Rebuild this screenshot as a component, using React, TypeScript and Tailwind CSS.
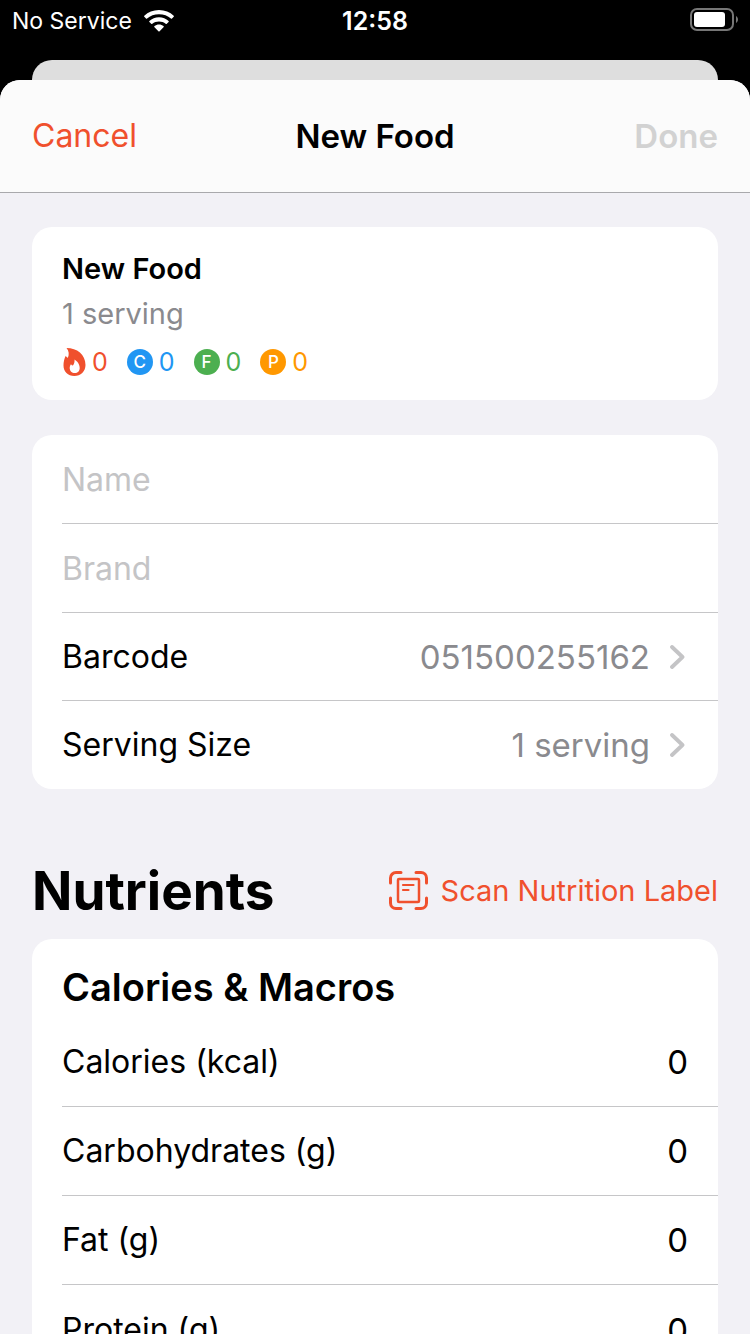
import { useState } from "react";

const macros = [
  { letter: "C", label: "Carbohydrates", value: 0, text: "text-[#2196f3]", bg: "bg-[#2196f3]" },
  { letter: "F", label: "Fat", value: 0, text: "text-[#4caf50]", bg: "bg-[#4caf50]" },
  { letter: "P", label: "Protein", value: 0, text: "text-[#ff9800]", bg: "bg-[#ff9800]" },
];

const nutrients = [
  { id: "calories", label: "Calories (kcal)" },
  { id: "carbs", label: "Carbohydrates (g)" },
  { id: "fat", label: "Fat (g)" },
  { id: "protein", label: "Protein (g)" },
];

function WifiIcon() {
  return (
    <svg width="30" height="22" viewBox="0 0 30 22" fill="#fff" aria-hidden="true">
      <path d="M15 0C9.200 0 4 2.200 .3 5.700a.8.8 0 0 0 0 1.100l1.700 1.700a.8.8 0 0 0 1.100 0C6.200 5.800 10.400 4.300 15 4.300s8.800 1.500 11.900 4.200a.8.8 0 0 0 1.100 0l1.700-1.700a.8.8 0 0 0 0-1.100C26 2.200 20.800 0 15 0Z" />
      <path d="M15 7.200c-3.700 0-7.100 1.400-9.600 3.700a.8.8 0 0 0 0 1.100l1.800 1.800a.8.8 0 0 0 1.100 0c1.800-1.500 4.200-2.300 6.700-2.300s4.900.8 6.700 2.300a.8.8 0 0 0 1.100 0l1.800-1.800a.8.8 0 0 0 0-1.100c-2.500-2.300-5.900-3.700-9.600-3.700Z" />
      <path d="M15 14.500c-1.700 0-3.300.6-4.500 1.600a.7.7 0 0 0 0 1.100l3.900 4a.8.8 0 0 0 1.200 0l3.900-4a.7.7 0 0 0 0-1.100c-1.200-1-2.800-1.600-4.500-1.600Z" />
    </svg>
  );
}

function BatteryIcon() {
  return (
    <svg width="48" height="24" viewBox="0 0 48 24" fill="none" aria-hidden="true">
      <rect x="1" y="1" width="42" height="21" rx="6" stroke="#767676" strokeWidth="2" />
      <rect x="4" y="4" width="31" height="15" rx="3" fill="#fff" />
      <path d="M46 8c1.500 1 2 2.200 2 3.500S47.500 14 46 15Z" fill="#767676" />
    </svg>
  );
}

function FlameIcon() {
  return (
    <svg width="23" height="28" viewBox="0 0 23 28" aria-hidden="true">
      <path
        d="M3.500 0C14 0 22.500 6.500 22.500 17c0 6.500-4.800 11-11.200 11S.5 23.800.5 17.500c0-3.300.7-6.800 2.300-9.800.5 1 1.100 1.600 2.100 2C6.300 6.500 6 2.700 3.500 0Z"
        fill="#f0502d"
      />
      <path
        d="M11.500 11.500c2.500 1.500 5.200 4.700 5.200 8.400 0 3-2 5-4.900 5s-5.100-2-5.100-5c0-1.400.5-2.700 1.300-3.700.5.700 1.100 1.200 1.900 1.400 1.300-1.700 1.900-4 1.600-6.100Z"
        fill="#fff"
      />
    </svg>
  );
}

function ScanIcon() {
  return (
    <svg width="40" height="40" viewBox="0 0 40 40" fill="none" stroke="currentColor" strokeLinecap="round" strokeLinejoin="round" aria-hidden="true">
      <path
        d="M1.500 12V7A5.500 5.500 0 0 1 7 1.500h5M27 1.500h5A5.500 5.500 0 0 1 37.500 7v5M37.500 27v5a5.500 5.500 0 0 1-5.500 5.500h-5M12 37.500H7A5.500 5.500 0 0 1 1.500 32v-5"
        strokeWidth="3"
      />
      <rect x="9" y="8" width="21" height="23" rx="1" strokeWidth="2.500" />
      <path d="M14 14h10.500M14 19h5.500" strokeWidth="2.200" />
    </svg>
  );
}

function Chevron() {
  return (
    <svg width="16" height="24" viewBox="0 0 16 24" fill="none" aria-hidden="true">
      <path d="M2 2L12.500 12 2 22" stroke="#c4c4c6" strokeWidth="3.800" strokeLinecap="round" strokeLinejoin="round" />
    </svg>
  );
}

function DetailRow({ label, value }: { label: string; value: string }) {
  return (
    <button type="button" className="flex h-[88px] w-full items-center pr-8 text-left">
      <span className="flex-1">{label}</span>
      <span className="text-[33px] text-[#8a8a8e]">{value}</span>
      <span className="ml-5">
        <Chevron />
      </span>
    </button>
  );
}

export default function App() {
  const [name, setName] = useState("");
  const [brand, setBrand] = useState("");
  const [values, setValues] = useState<Record<string, string>>({});

  return (
    <div className="flex h-screen flex-col bg-black font-['Inter','Liberation_Sans',sans-serif] text-[32px] leading-10 text-black">
      <div className="grid h-[60px] shrink-0 grid-cols-3 items-start px-3 pt-2 text-[23px] leading-[26px] text-white">
        <div className="flex items-center gap-3">
          <span>No Service</span>
          <WifiIcon />
        </div>
        <time className="text-center text-[25px] font-semibold">12:58</time>
        <div className="flex justify-end">
          <BatteryIcon />
        </div>
      </div>

      <div className="mx-8 h-5 shrink-0 rounded-t-[20px] bg-[#dedede]" />

      <div className="flex min-h-0 flex-1 flex-col overflow-hidden rounded-t-[20px] bg-[#f2f1f6]">
        <header className="grid h-[113px] shrink-0 grid-cols-3 items-center border-b border-[#a9a9ac] bg-[#fbfbfb] px-8">
          <button type="button" className="justify-self-start text-[#f0502d]">
            Cancel
          </button>
          <h1 className="text-center text-[33px] font-semibold">New Food</h1>
          <button type="button" disabled className="justify-self-end text-[33px] font-semibold text-[#d2d2d2]">
            Done
          </button>
        </header>

        <main className="min-h-0 flex-1 overflow-y-auto px-8 pt-[34px] [scrollbar-width:none]">
          <section className="rounded-[20px] bg-white px-[30px] pt-5 pb-[18px] text-[29px]">
            <h2 className="leading-11 font-semibold">New Food</h2>
            <p className="leading-[46px] text-[#8a8a8e]">1 serving</p>
            <div className="mt-[5px] flex items-center gap-[19px] pl-px text-[25px]">
              <span className="flex items-center gap-1.5 text-[#f0502d]">
                <FlameIcon />0
              </span>
              {macros.map((macro) => (
                <span key={macro.letter} title={macro.label} className={`flex items-center gap-1.5 ${macro.text}`}>
                  <span className={`flex size-[26px] items-center justify-center rounded-full text-[17px] font-medium text-white ${macro.bg}`}>
                    {macro.letter}
                  </span>
                  {macro.value}
                </span>
              ))}
            </div>
          </section>

          <section className="mt-[35px] divide-y divide-[#c6c6c8] rounded-[20px] bg-white pl-[30px]">
            <div>
              <input
                aria-label="Name"
                placeholder="Name"
                value={name}
                onChange={(e) => setName(e.target.value)}
                className="h-[88px] w-full pr-8 outline-none placeholder:text-[#c4c4c6]"
              />
            </div>
            <div>
              <input
                aria-label="Brand"
                placeholder="Brand"
                value={brand}
                onChange={(e) => setBrand(e.target.value)}
                className="h-[88px] w-full pr-8 outline-none placeholder:text-[#c4c4c6]"
              />
            </div>
            <DetailRow label="Barcode" value="051500255162" />
            <DetailRow label="Serving Size" value="1 serving" />
          </section>

          <div className="mt-[70px] flex items-center justify-between">
            <h2 className="text-[53px] leading-[64px] font-bold">Nutrients</h2>
            <button type="button" className="flex items-center gap-3 text-[29px] text-[#f0502d]">
              <ScanIcon />
              Scan Nutrition Label
            </button>
          </div>

          <section className="mt-4 rounded-[20px] bg-white pt-6 pl-[30px]">
            <h3 className="text-[38px] leading-12 font-semibold">Calories &amp; Macros</h3>
            <div className="mt-[7px] divide-y divide-[#c6c6c8]">
              {nutrients.map(({ id, label }) => (
                <div key={id} className="flex h-[89px] items-center pr-[30px]">
                  <label htmlFor={id} className="shrink-0">
                    {label}
                  </label>
                  <input
                    id={id}
                    inputMode="decimal"
                    value={values[id] ?? "0"}
                    onChange={(e) => setValues({ ...values, [id]: e.target.value })}
                    className="min-w-0 flex-1 text-right text-[33px] outline-none"
                  />
                </div>
              ))}
            </div>
          </section>
        </main>
      </div>
    </div>
  );
}
